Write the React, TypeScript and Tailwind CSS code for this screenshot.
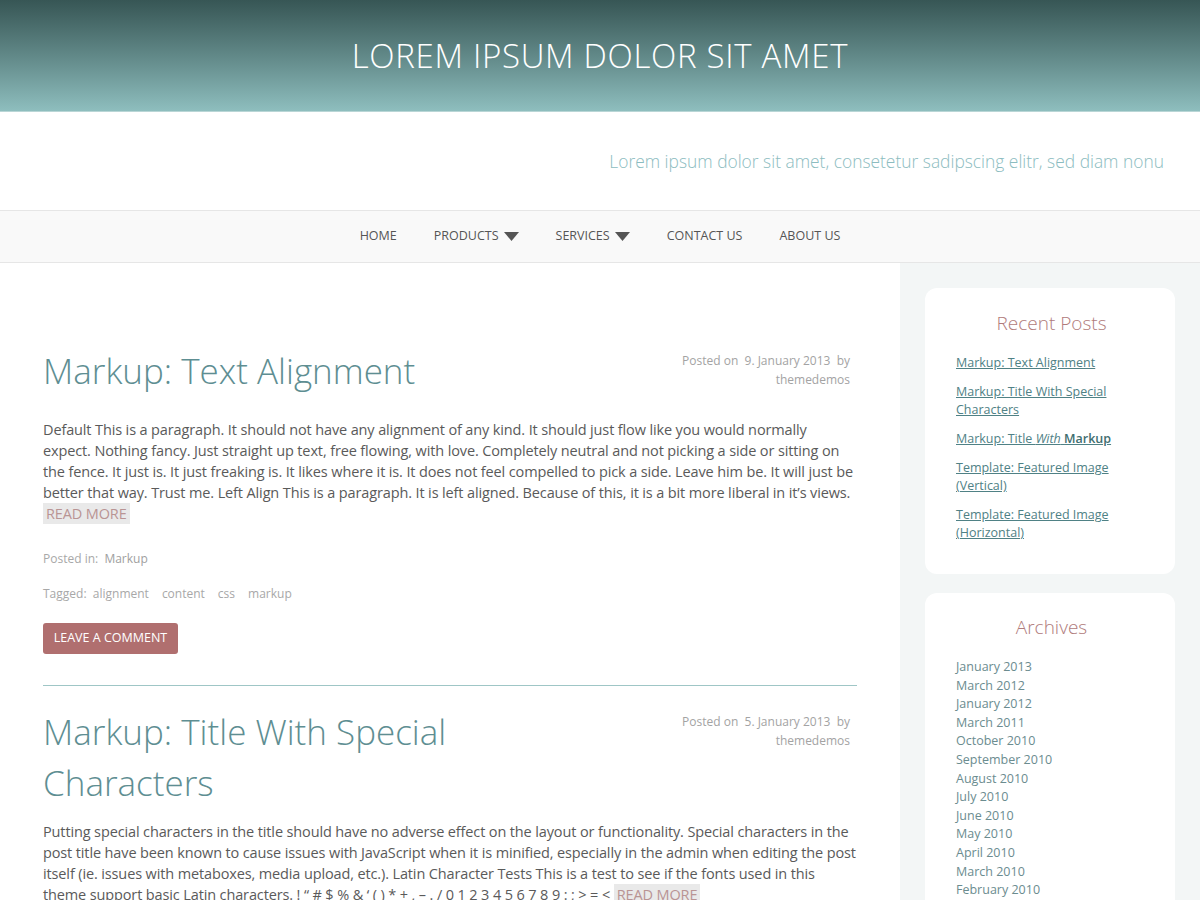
import React from 'react';

const navItems = [
  { label: 'Home', caret: false },
  { label: 'Products', caret: true },
  { label: 'Services', caret: true },
  { label: 'Contact us', caret: false },
  { label: 'About us', caret: false },
];

const archives = [
  'January 2013',
  'March 2012',
  'January 2012',
  'March 2011',
  'October 2010',
  'September 2010',
  'August 2010',
  'July 2010',
  'June 2010',
  'May 2010',
  'April 2010',
  'March 2010',
  'February 2010',
  'January 2010',
];

function Caret() {
  return (
    <svg width="15" height="9" viewBox="0 0 15 9" className="ml-[5px] inline-block">
      <path d="M0 0 L15 0 L7.5 9 Z" fill="#555" />
    </svg>
  );
}

interface PostProps {
  title: string;
  date: string;
  body: string;
  bodyGap: string;
  tags: string[];
  last?: boolean;
}

function Post({ title, date, body, bodyGap, tags, last }: PostProps) {
  return (
    <article className={last ? '' : 'border-b border-[#9fc6c6] pb-[31px] mb-[20px]'}>
      <div className="flex items-start justify-between">
        <h2 className="w-[560px] text-[35px] leading-[51px] font-light text-[#5e8e92]">{title}</h2>
        <div className="mt-[6px] w-[190px] pr-[7px] text-right text-[12px] leading-[19px] text-[#a3a3a3]">
          Posted on&nbsp; {date}&nbsp; by
          <br />
          themedemos
        </div>
      </div>
      <p className={`${bodyGap} text-[14.5px] leading-[21px] tracking-[-0.13px] text-[#5a5a5a]`}>
        {body}{' '}
        <a className="bg-[#e9e9e9] px-[3px] py-[1px] uppercase text-[#b99494]">Read more</a>
      </p>
      <div className="mt-[25px] text-[12px] leading-[19px] text-[#a8a8a8]">
        Posted in:&nbsp; <span className="text-[#a0a0a0]">Markup</span>
      </div>
      <div className="mt-[16px] flex gap-[13px] text-[12px] leading-[19px] text-[#a8a8a8]">
        <span>Tagged:&nbsp; {tags[0]}</span>
        {tags.slice(1).map((t) => (
          <span key={t}>{t}</span>
        ))}
      </div>
      <button className="mt-[20px] h-[31px] w-[135px] rounded-[3px] bg-[#b06f6f] text-[12.5px] uppercase text-white">
        Leave a comment
      </button>
    </article>
  );
}

export default function App() {
  return (
    <div className="w-[1200px] h-[900px] overflow-hidden bg-white" style={{ fontFamily: '"Open Sans", "Liberation Sans", sans-serif' }}>
      {/* Site header */}
      <header className="h-[112px] border-b border-[#b9d6d6] bg-gradient-to-b from-[#375655] to-[#8ebebe] flex items-center justify-center">
        <h1 className="text-[33px] font-light uppercase tracking-[0.7px] text-white">Lorem ipsum dolor sit amet</h1>
      </header>

      <div className="h-[98px] flex items-center justify-end pr-[36px]">
        <p className="text-[17.4px] font-light text-[#8cbcc0]">
          Lorem ipsum dolor sit amet, consetetur sadipscing elitr, sed diam nonu
        </p>
      </div>

      {/* Navigation */}
      <nav className="h-[53px] border-y border-[#e6e6e6] bg-[#f9f9f9] flex items-center justify-center gap-[37px]">
        {navItems.map((item) => (
          <a key={item.label} className="flex items-center text-[12.5px] uppercase text-[#555]">
            {item.label}
            {item.caret && <Caret />}
          </a>
        ))}
      </nav>

      <div className="grid grid-cols-[900px_300px]">
        <main className="px-[43px] pt-[82px]">
          <Post
            title="Markup: Text Alignment"
            date="9. January 2013"
            bodyGap="mt-[23px]"
            tags={['alignment', 'content', 'css', 'markup']}
            body="Default This is a paragraph. It should not have any alignment of any kind. It should just flow like you would normally expect. Nothing fancy. Just straight up text, free flowing, with love. Completely neutral and not picking a side or sitting on the fence. It just is. It just freaking is. It likes where it is. It does not feel compelled to pick a side. Leave him be. It will just be better that way. Trust me. Left Align This is a paragraph. It is left aligned. Because of this, it is a bit more liberal in it’s views."
          />
          <Post
            title="Markup: Title With Special Characters"
            date="5. January 2013"
            bodyGap="mt-[13px]"
            tags={['html', 'markup', 'post', 'title']}
            last
            body="Putting special characters in the title should have no adverse effect on the layout or functionality. Special characters in the post title have been known to cause issues with JavaScript when it is minified, especially in the admin when editing the post itself (ie. issues with metaboxes, media upload, etc.). Latin Character Tests This is a test to see if the fonts used in this theme support basic Latin characters. ! “ # $ % & ‘ ( ) * + , – . / 0 1 2 3 4 5 6 7 8 9 : ; > = <"
          />
        </main>

        <aside className="bg-[#f3f6f6] px-[25px] pt-[25px] pb-[40px] min-h-[640px] flex flex-col gap-[19px]">
          <section className="rounded-[12px] bg-white pl-[31px] pr-[28px] pt-[21px] pb-[32px]">
            <h3 className="text-center text-[19px] leading-[28px] font-light text-[#b07b7b]">Recent Posts</h3>
            <ul className="mt-[17px] flex flex-col gap-[11px] text-[12.5px] leading-[18px] text-[#4f8185]">
              <li><a className="underline">Markup: Text Alignment</a></li>
              <li><a className="underline">Markup: Title With Special Characters</a></li>
              <li>
                <a className="underline">
                  Markup: Title <em>With</em> <strong className="font-semibold text-[#3f6e70]">Markup</strong>
                </a>
              </li>
              <li><a className="underline">Template: Featured Image (Vertical)</a></li>
              <li><a className="underline">Template: Featured Image (Horizontal)</a></li>
            </ul>
          </section>

          <section className="rounded-[12px] bg-white pl-[31px] pr-[28px] pt-[20px] pb-[32px]">
            <h3 className="text-center text-[19px] leading-[28px] font-light text-[#b07b7b]">Archives</h3>
            <ul className="mt-[17px] text-[12.5px] leading-[18.6px] text-[#6b8c8f]">
              {archives.map((a) => (
                <li key={a}><a>{a}</a></li>
              ))}
            </ul>
          </section>
        </aside>
      </div>
    </div>
  );
}
